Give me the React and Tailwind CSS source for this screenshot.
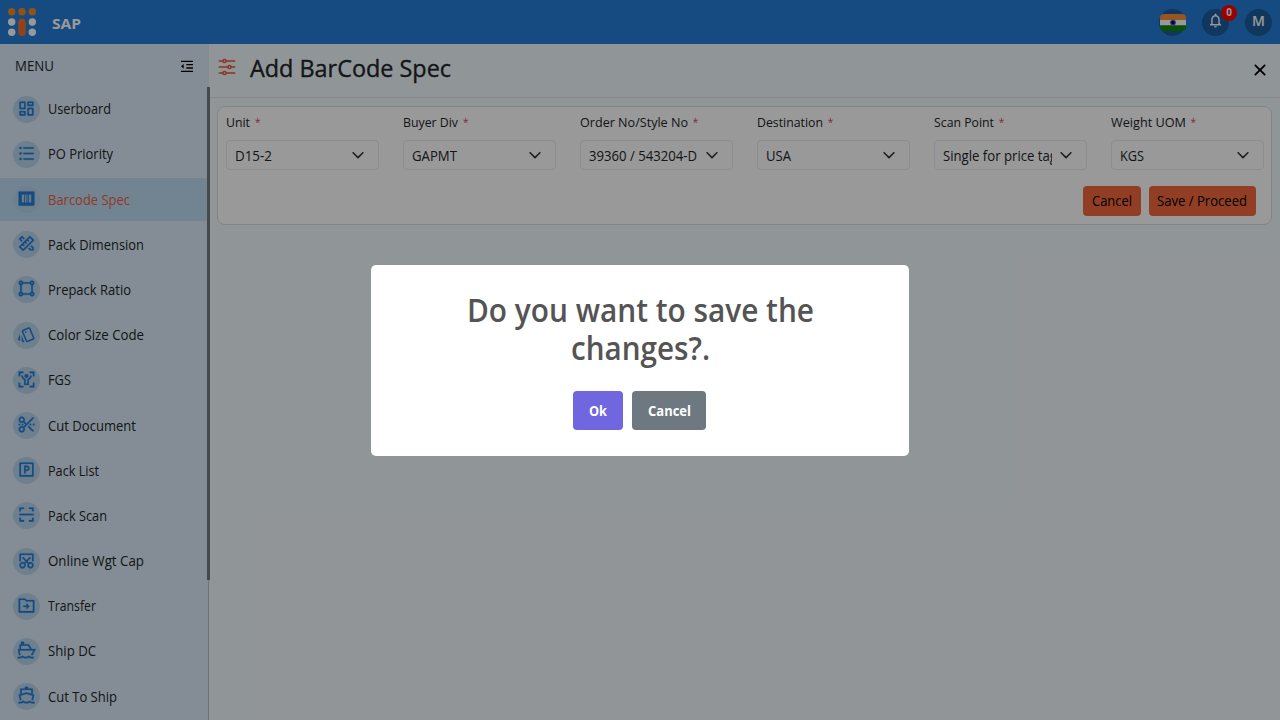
import React, { useLayoutEffect, useRef, useState } from "react";
import {
  RiDashboardLine, RiListUnordered, RiBarcodeBoxFill, RiPencilRuler2Line, RiShapeLine,
  RiBodyScanLine, RiScissorsCutLine, RiParkingBoxLine, RiQrScan2Line, RiScreenshotLine,
  RiFolderTransferLine, RiShipLine, RiShip2Line, RiIndentDecrease, RiCloseLine,
} from "react-icons/ri";
import { MdOutlineStyle, MdNotificationsNone } from "react-icons/md";

const menu = [
  { label: "Userboard", Icon: RiDashboardLine, width: 63 },
  { label: "PO Priority", Icon: RiListUnordered, width: 65 },
  { label: "Barcode Spec", Icon: RiBarcodeBoxFill, width: 82, active: true },
  { label: "Pack Dimension", Icon: RiPencilRuler2Line, width: 96 },
  { label: "Prepack Ratio", Icon: RiShapeLine, width: 83 },
  { label: "Color Size Code", Icon: MdOutlineStyle, width: 96, stroke: 0 },
  { label: "FGS", Icon: RiBodyScanLine, width: 23 },
  { label: "Cut Document", Icon: RiScissorsCutLine, width: 88 },
  { label: "Pack List", Icon: RiParkingBoxLine, width: 51 },
  { label: "Pack Scan", Icon: RiQrScan2Line, width: 59 },
  { label: "Online Wgt Cap", Icon: RiScreenshotLine, width: 96 },
  { label: "Transfer", Icon: RiFolderTransferLine, width: 48 },
  { label: "Ship DC", Icon: RiShip2Line, width: 48 },
  { label: "Cut To Ship", Icon: RiShipLine, width: 69 },
];

const fields = [
  { label: "Unit", value: "D15-2", lw: 24, vw: 37 },
  { label: "Buyer Div", value: "GAPMT", lw: 55, vw: 45 },
  { label: "Order No/Style No", value: "39360 / 543204-D", lw: 108, vw: 108 },
  { label: "Destination", value: "USA", lw: 66, vw: 25 },
  { label: "Scan Point", value: "Single for price tag", lw: 60, vw: 114 },
  { label: "Weight UOM", value: "KGS", lw: 75, vw: 24 },
];

/* Condenses or widens a label so that it fills exactly the given width. */
function Fit({ width, className = "text-sm leading-5", children }) {
  const ref = useRef(null);
  const [scale, setScale] = useState(1);
  useLayoutEffect(() => {
    const natural = ref.current.getBoundingClientRect().width / scale;
    if (natural > 0) setScale(width / natural);
  }, [width]);
  return (
    <span className={"block shrink-0 whitespace-nowrap " + className} style={{ width }}>
      <span ref={ref} className="inline-block origin-left align-top" style={{ transform: `scaleX(${scale})` }}>{children}</span>
    </span>
  );
}

function Logo() {
  return (
    <svg width="28" height="28" viewBox="0 0 28 28">
      <g fill="#f28c1c"><circle cx="3.7" cy="3.7" r="3.7" /><circle cx="14" cy="3.7" r="3.7" /><circle cx="24.3" cy="3.7" r="3.7" /></g>
      <g fill="#fff"><circle cx="3.7" cy="14" r="3.7" /><circle cx="24.3" cy="14" r="3.7" /><circle cx="3.7" cy="24.3" r="3.7" /><circle cx="24.3" cy="24.3" r="3.7" /></g>
      <rect x="10.2" y="10.4" width="7.6" height="17.6" rx="3.8" fill="#f1702c" />
    </svg>
  );
}

function Flag() {
  return (
    <svg width="26" height="17" viewBox="0 0 26 17">
      <defs><clipPath id="flag"><rect width="26" height="17" rx="4" /></clipPath></defs>
      <g clipPath="url(#flag)">
        <rect width="26" height="6" fill="#f9903a" />
        <rect y="6" width="26" height="5.5" fill="#fff" />
        <rect y="11.5" width="26" height="5.5" fill="#128807" />
      </g>
      <circle cx="13" cy="8.6" r="2.9" fill="#5a5ab8" />
      <circle cx="13" cy="8.6" r="1.8" fill="#000080" />
    </svg>
  );
}

function Sliders() {
  return (
    <svg width="18" height="18" viewBox="0 0 18 18" fill="none" stroke="#f2502f" strokeWidth="1.5">
      <path d="M.8 3h4M8.2 3h9M.8 9h9M13.2 9h4M.8 15h4M8.2 15h9" />
      <circle cx="6.5" cy="3" r="1.6" /><circle cx="11.5" cy="9" r="1.6" /><circle cx="6.5" cy="15" r="1.6" />
    </svg>
  );
}

export default function App() {
  return (
    <div className="relative flex h-[720px] w-[1280px] flex-col overflow-hidden bg-[#f1f8fe] font-['Open_Sans','Noto_Sans',sans-serif] text-[#212529]">
      <header className="flex h-11 shrink-0 items-center bg-[#247dd5] pl-2 pr-2 text-white">
        <Logo />
        <div className="ml-4 mt-px"><Fit width={29} className="text-[15px] font-bold leading-5">SAP</Fit></div>
        <div className="ml-auto flex items-center gap-4">
          <div className="flex size-[27px] items-center justify-center rounded-full bg-[#1b5c9b]"><Flag /></div>
          <div className="relative flex size-[27px] items-center justify-center rounded-full bg-[#1b5c9b]">
            <MdNotificationsNone size={17} className="-mt-[3px]" />
            <span className="absolute -top-1 left-[19px] flex size-4 items-center justify-center rounded-full bg-[#ff0000] pb-px text-[10px] font-bold leading-none">0</span>
          </div>
          <div className="flex size-[27px] items-center justify-center rounded-full bg-[#1b5c9b] pb-[2px] text-sm font-semibold">M</div>
        </div>
      </header>
      <div className="flex min-h-0 flex-1">
        <aside className="flex w-[210px] shrink-0 flex-col bg-[linear-gradient(to_right,#dcecf8_209px,#f1f8fe_209px)]">
          <div className="flex h-[43px] shrink-0 items-center justify-between pl-[15px] pr-[15px]">
            <Fit width={39} className="text-sm leading-5">MENU</Fit>
            <RiIndentDecrease size={16} className="text-black" />
          </div>
          <div className="flex min-h-0 flex-1">
            <nav className="flex flex-1 flex-col gap-[2px] overflow-hidden pt-[0.6px]">
              {menu.map(({ label, Icon, width, active, stroke = 0.25 }) => (
                <div key={label} className={"flex h-[43.2px] shrink-0 items-center pl-[13px] " + (active ? "bg-[#bedaf2] text-[#f2623a]" : "")}>
                  <div className="mr-2 flex size-[27px] items-center justify-center rounded-full bg-[#b7d4ed]">
                    <Icon size={19} strokeWidth={stroke} className="-mt-[2px] text-[#247dd5]" />
                  </div>
                  <Fit width={width}>{label}</Fit>
                </div>
              ))}
            </nav>
            <div className="flex w-[3px] flex-col">
              <div className="h-[493px] w-[3px] shrink-0 bg-[#767b7f]" />
              <div className="ml-px w-px flex-1 bg-[#b4c0ca]" />
            </div>
          </div>
        </aside>
        <main className="flex min-w-0 flex-1 flex-col">
          <div className="flex h-[54px] items-center border-b border-[#dfe5ea] pb-1 pl-2 pr-3">
            <div className="-mt-[3px]"><Sliders /></div>
            <h1 className="-mt-[2px] ml-[14px]"><Fit width={201} className="text-2xl font-medium leading-8 [-webkit-text-stroke:0.35px]">Add BarCode Spec</Fit></h1>
            <RiCloseLine size={22} className="-mr-[3px] ml-auto mt-[2px] text-black" />
          </div>
          <section className="ml-[7px] mr-2 mt-2 h-[119px] rounded-lg border border-[#d9dee2] bg-white pl-2 pr-[7.5px] pt-[5px]">
            <div className="grid grid-cols-6 gap-6">
              {fields.map((f) => (
                <div key={f.label}>
                  <div className="flex gap-[5px]">
                    <Fit width={f.lw} className="text-[13px] leading-5">{f.label}</Fit>
                    <span className="text-[10px] leading-5 text-[#e0405a]">*</span>
                  </div>
                  <div className="mt-2 flex h-[30px] items-center rounded border border-[#e9ecef] pl-2 pr-[14px]">
                    <div className="mt-px min-w-0 flex-1 overflow-hidden"><Fit width={f.vw}>{f.value}</Fit></div>
                    <svg width="12" height="12" viewBox="0 0 16 16" className="ml-2 shrink-0" fill="none" stroke="#343a40" strokeWidth="2.2" strokeLinecap="round" strokeLinejoin="round"><path d="m1.5 5 6.5 6.5 6.5-6.5" /></svg>
                  </div>
                </div>
              ))}
            </div>
            <div className="mr-2 mt-4 flex justify-end gap-2 text-black">
              <button className="flex h-[30px] w-[58px] items-center justify-center rounded bg-[#f4683c]"><Fit width={40}>Cancel</Fit></button>
              <button className="flex h-[30px] w-[107px] items-center justify-center rounded bg-[#f4683c]"><Fit width={90}>Save / Proceed</Fit></button>
            </div>
          </section>
        </main>
      </div>
      <div className="absolute inset-0 flex items-center justify-center bg-black/40">
        <div className="flex h-[191px] w-[538px] flex-col items-center rounded-[5px] bg-white pt-[26px] text-[#545454]">
          <h2 className="flex flex-col items-center">
            <Fit width={347} className="text-[32px] font-semibold leading-[38px]">Do you want to save the</Fit>
            <Fit width={139} className="text-[32px] font-semibold leading-[38px]">changes?.</Fit>
          </h2>
          <div className="mr-px mt-6 flex gap-[9px] text-white">
            <button className="flex h-[39px] w-[50px] items-center justify-center rounded bg-[#7066e0] pt-px"><Fit width={18} className="text-[13.5px] font-bold leading-5">Ok</Fit></button>
            <button className="flex h-[39px] w-[74px] items-center justify-center rounded bg-[#6e7881] pt-px"><Fit width={43} className="text-[13.5px] font-bold leading-5">Cancel</Fit></button>
          </div>
        </div>
      </div>
    </div>
  );
}
